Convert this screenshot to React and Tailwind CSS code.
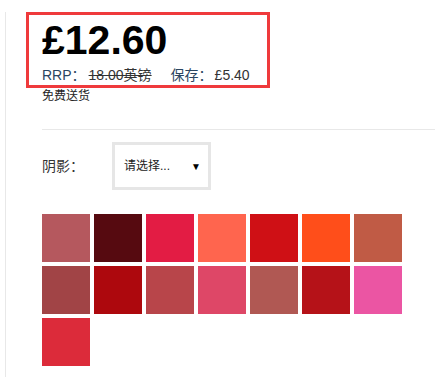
import React from 'react';

const shades = [
  '#b5585e', '#560a10', '#e31c44', '#ff654e', '#cf1015', '#ff4e1a', '#c05b45',
  '#a14446', '#ad080d', '#b8454a', '#de4767', '#b05853', '#b51218', '#eb55a3',
  '#dc2b3a',
];

const App = () => {
  return (
    <div className="h-[381px] w-[442px] overflow-hidden bg-white text-[#333] [font-family:'Liberation_Sans','Noto_Sans_CJK_SC',sans-serif]">
      <div className="ml-[5px] mt-[16px] h-[365px] border-l border-[#e8e8e8] pl-[36px] pr-[7px]">
        {/* Price box */}
        <div className="-ml-[16px] -mt-[4px] w-[244px] border-[3px] border-[#ef3a3c] pl-[13px] pt-[5px] pb-[1px]">
          <div className="h-[40px] text-[41px] font-bold leading-[40px] text-black">£12.60</div>
          <div className="mt-[6px] flex h-[18px] items-center text-[14px] leading-[18px] text-[#2b4560]">
            <span>RRP：</span>
            <span className="ml-[3px] text-[#333] line-through">18.00英镑 </span>
            <span className="ml-[19px]">保存：</span>
            <span className="ml-[2px] text-[#333]">£5.40</span>
          </div>
        </div>
        <div className="text-[12px] leading-[16px] text-[#222]">免费送货</div>

        <div className="mt-[25px] h-px bg-[#e8e8e8]" />

        {/* Shade select */}
        <div className="mt-[12px] flex items-center">
          <span className="w-[70px] text-[14px]">阴影：</span>
          <div className="flex h-[48px] w-[99px] items-center justify-between border-[3px] border-[#e6e6e6] pl-[9px] pr-[7px] text-[12px] text-[#222]">
            <span>请选择...</span>
            <span className="text-[10px] text-black">▼</span>
          </div>
        </div>

        {/* Swatches */}
        <div className="mt-[24px] grid w-[360px] grid-cols-7 gap-[4px]">
          {shades.map((c, i) => (
            <div key={i} className="h-[48px] w-[48px]" style={{ backgroundColor: c }} />
          ))}
        </div>
      </div>
    </div>
  );
};

export default App;
